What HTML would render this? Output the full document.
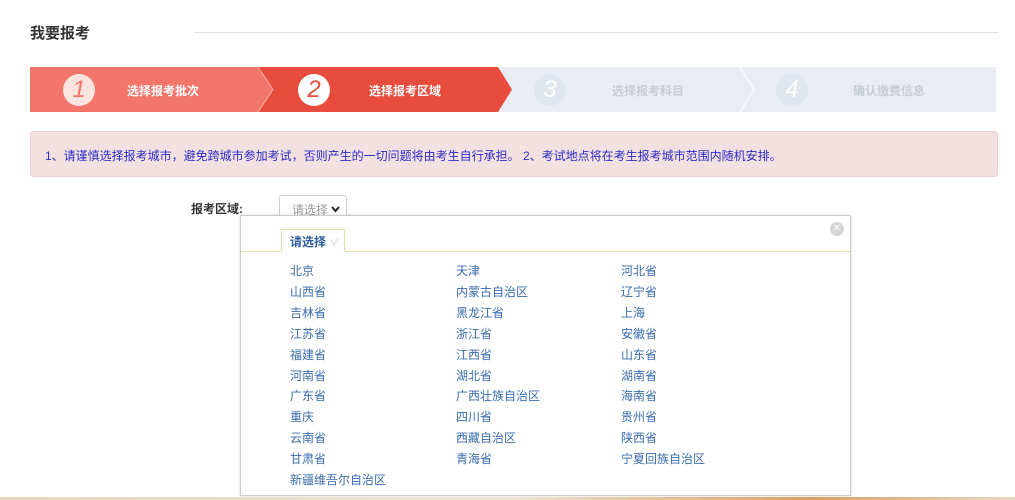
<!DOCTYPE html><html><head><meta charset="utf-8"><style>
*{margin:0;padding:0;box-sizing:border-box}
body{width:1015px;height:500px;overflow:hidden;background:#fff;font-family:"Liberation Sans","Noto Sans CJK SC",sans-serif;position:relative}
.a{position:absolute}
.t{font-size:15px;font-weight:bold;color:#333;left:30px;top:22px}
.hr{left:195px;top:32px;width:803px;height:1px;background:#ddd}
.c{position:absolute;top:7px;width:32px;height:32px;border-radius:50%;font-size:24px;font-style:italic;text-align:center;line-height:32px}
.st{position:absolute;top:15px;font-size:12px;font-weight:bold}
.alert{left:30px;top:131px;width:968px;height:46px;background:#f3e1e2;border:1px solid #ebcfd2;border-radius:3px;font-size:12px;color:#2b2bc8;padding:15px 0 0 14px}
.lbl{left:191px;top:200px;font-size:12px;font-weight:bold;color:#333}
.sel{left:279px;top:195px;width:68px;height:24px;border:1px solid #ccc;border-radius:3px;font-size:12px;color:#999;padding:5px 0 0 12px}
.pop{left:240px;top:215px;width:611px;height:281px;border:1px solid #ccc;background:#fff;box-shadow:0 0 3px rgba(0,0,0,.15)}
.tab{position:absolute;left:40px;top:13px;width:64px;height:23px;border:1px solid #ecd9a6;border-bottom:1px solid #fff;background:#fff;font-size:12px;font-weight:bold;color:#2b5d9a;padding:3px 0 0 8px}
.line{position:absolute;left:0;top:35px;width:609px;height:1px;background:#ecd9a6}
.x{position:absolute;right:6px;top:6px;width:14px;height:14px;border-radius:50%;background:#d5d5d5;color:#fff;font-size:10px;text-align:center;line-height:14px}
.it{position:absolute;font-size:12px;color:#3a6cae}
</style></head><body>
<div class="a t">我要报考</div><div class="a hr"></div>
<svg class="a" style="left:30px;top:67px" width="966" height="45">
<rect x="0" y="0" width="966" height="45" fill="#e9edf3"/>
<polygon points="0,0 228,0 243,22.5 228,45 0,45" fill="#f2756a"/>
<polygon points="228,0 468,0 482,22.5 468,45 228,45 243,22.5" fill="#e84c3d"/>
<polyline points="228,0 243,22.5 228,45" fill="none" stroke="#f7b1aa" stroke-width="1"/>
<polyline points="710,0 724,22.5 710,45" fill="none" stroke="#fff" stroke-width="1"/>
</svg>
<div class="a" style="left:30px;top:67px;width:966px;height:45px">
<div class="c" style="left:33px;background:#fbe3df;color:#f2756a">1</div>
<div class="st" style="left:97px;color:#fff">选择报考批次</div>
<div class="c" style="left:268px;background:#fff;color:#e84c3d">2</div>
<div class="st" style="left:339px;color:#fff">选择报考区域</div>
<div class="c" style="left:504px;background:#e0e6ef;color:#fff">3</div>
<div class="st" style="left:582px;color:#c8ccd3">选择报考科目</div>
<div class="c" style="left:746px;background:#e0e6ef;color:#fff">4</div>
<div class="st" style="left:823px;color:#c8ccd3">确认缴费信息</div>
</div>
<div class="a alert">1、请谨慎选择报考城市，避免跨城市参加考试，否则产生的一切问题将由考生自行承担。 2、考试地点将在考生报考城市范围内随机安排。</div>
<div class="a lbl">报考区域:</div>
<div class="a sel">请选择 <svg width="9" height="7" style="vertical-align:1px"><polyline points="1,1 4.5,5 8,1" fill="none" stroke="#222" stroke-width="2"/></svg></div>
<div class="a pop">
<div class="line"></div><div class="tab">请选择 <span style="color:#bbb;font-weight:normal;font-size:9px">∨</span></div><div class="x">✕</div>
<div class="it" style="left:49px;top:45px;line-height:20.9px">北京<br>山西省<br>吉林省<br>江苏省<br>福建省<br>河南省<br>广东省<br>重庆<br>云南省<br>甘肃省<br>新疆维吾尔自治区</div>
<div class="it" style="left:215px;top:45px;line-height:20.9px">天津<br>内蒙古自治区<br>黑龙江省<br>浙江省<br>江西省<br>湖北省<br>广西壮族自治区<br>四川省<br>西藏自治区<br>青海省</div>
<div class="it" style="left:380px;top:45px;line-height:20.9px">河北省<br>辽宁省<br>上海<br>安徽省<br>山东省<br>湖南省<br>海南省<br>贵州省<br>陕西省<br>宁夏回族自治区</div>
</div>
<div class="a" style="left:0;top:497px;width:1015px;height:3px;background:linear-gradient(90deg,#e8d7c0,#f0e4d4 50%,#d9a060 80%,#e8d7c0)"></div>
</body></html>
